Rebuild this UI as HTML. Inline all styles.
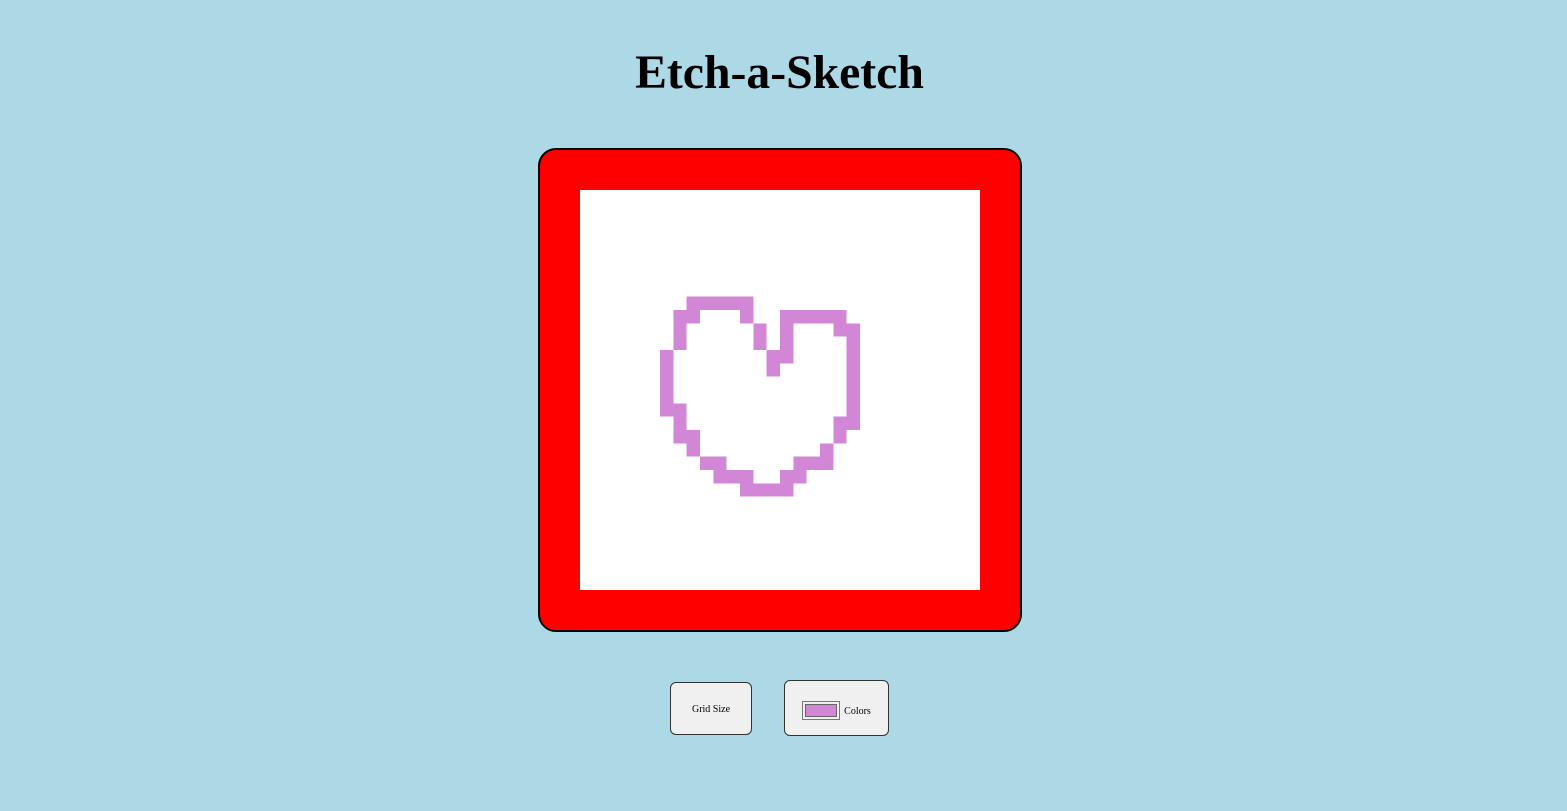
<!DOCTYPE html>
<html><head><style>
html,body{margin:0;padding:0;}
body{width:1567px;height:811px;background:#add8e6;position:relative;font-family:"Liberation Serif",serif;overflow:hidden;}
h1{position:absolute;top:44px;left:-4px;width:1567px;margin:0;text-align:center;font-size:47.7px;font-weight:bold;line-height:58px;}
.frame{position:absolute;left:538px;top:148px;width:480px;height:480px;background:#f00;border:2px solid #000;border-radius:18px;}
.pad{position:absolute;left:40px;top:40px;width:400px;height:400px;background:#fff;}
.btn{position:absolute;background:#f0f0f0;border:1px solid #333;border-radius:6px;font-size:10px;display:flex;align-items:center;justify-content:center;box-sizing:border-box;}
.sw{display:inline-block;width:38px;height:19px;border:1px solid #777;box-sizing:border-box;padding:2px;margin-right:4px;}
.sw div{width:100%;height:100%;background:#d287d6;border:1px solid #666;box-sizing:border-box;}
</style></head><body>
<h1>Etch-a-Sketch</h1>
<div class="frame"><div class="pad">
<svg width="400" height="400" viewBox="0 0 30 30" shape-rendering="crispEdges" fill="#d287d6">
<rect x="8" y="8" width="5" height="1"/>
<rect x="7" y="9" width="2" height="1"/><rect x="12" y="9" width="1" height="1"/><rect x="15" y="9" width="5" height="1"/>
<rect x="7" y="10" width="1" height="2"/><rect x="13" y="10" width="1" height="2"/><rect x="15" y="10" width="1" height="2"/><rect x="19" y="10" width="2" height="1"/>
<rect x="20" y="11" width="1" height="7"/>
<rect x="6" y="12" width="1" height="5"/><rect x="14" y="12" width="2" height="1"/><rect x="14" y="13" width="1" height="1"/>
<rect x="7" y="16" width="1" height="3"/><rect x="19" y="17" width="1" height="2"/>
<rect x="8" y="18" width="1" height="2"/><rect x="18" y="19" width="1" height="2"/>
<rect x="9" y="20" width="2" height="1"/><rect x="16" y="20" width="2" height="1"/>
<rect x="10" y="21" width="3" height="1"/><rect x="15" y="21" width="2" height="1"/>
<rect x="12" y="22" width="4" height="1"/>
</svg>
</div></div>
<div class="btn" style="left:670px;top:682px;width:82px;height:53px;padding-top:1px;">Grid Size</div>
<div class="btn" style="left:784px;top:680px;width:105px;height:56px;padding-top:5px;"><span class="sw"><div></div></span><span style="position:relative;top:1px">Colors</span></div>
</body></html>
